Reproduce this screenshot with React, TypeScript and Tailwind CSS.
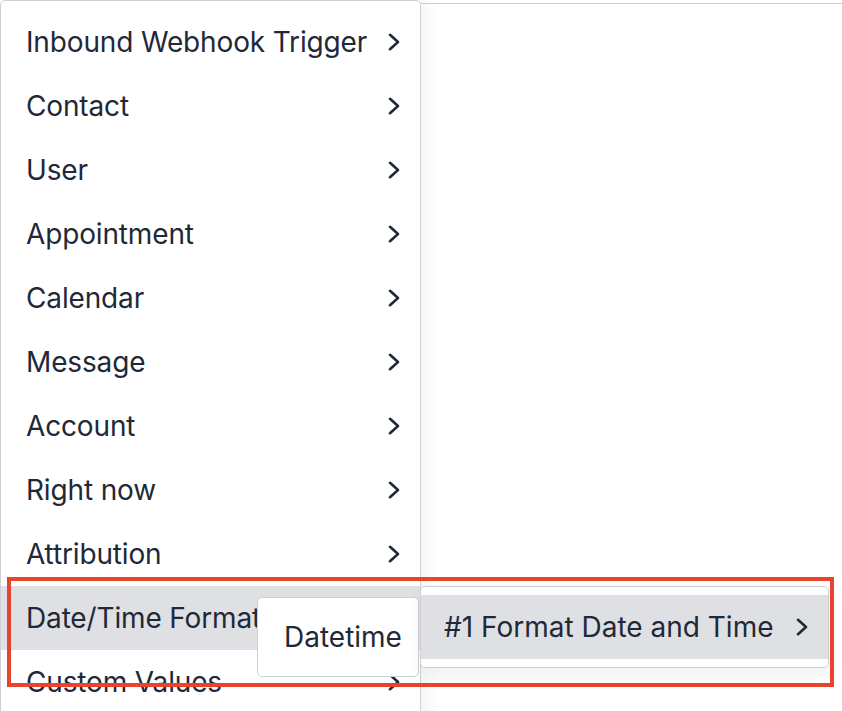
import React from "react";

const Chevron = () => (
  <svg width="14" height="18" viewBox="0 0 14 18" fill="none" className="shrink-0">
    <path d="M3 1.8 L11 9 L3 16.2" stroke="#1f2937" strokeWidth="2.6" strokeLinecap="round" strokeLinejoin="round" />
  </svg>
);

const items = [
  "Inbound Webhook Trigger",
  "Contact",
  "User",
  "Appointment",
  "Calendar",
  "Message",
  "Account",
  "Right now",
  "Attribution",
  "Date/Time Format",
  "Custom Values",
];

export default function App() {
  return (
    <div
      className="relative w-[842px] h-[711px] overflow-hidden bg-white text-[#1f2937]"
      style={{ fontFamily: "Inter, 'Noto Sans', sans-serif" }}
    >
      <div className="flex h-full">
        <div className="w-[421px] shrink-0 h-[760px] border-[1.5px] border-[#cfd0d3] rounded-[5px] bg-white pt-[9px] shadow-[6px_0_16px_rgba(0,0,0,0.05)] relative z-10">
          {items.map((t, i) => (
            <div
              key={t}
              className={`h-16 flex items-center justify-between pl-[25px] pr-[19px] text-[28px] tracking-[-0.15px] ${
                i === 9 ? "bg-[#dfe0e3]" : ""
              }`}
            >
              <span className="whitespace-nowrap overflow-hidden">{t}</span>
              <Chevron />
            </div>
          ))}
        </div>
        <div className="flex-1 mt-[3px] border-t-[1.5px] border-[#cfd0d3]" />
      </div>

      {/* Datetime submenu */}
      <div className="absolute z-20 left-[257px] top-[597px] w-[162px] h-[80px] bg-white border-[1.5px] border-[#cfd0d3] rounded-[5px] flex items-center pl-[26px] text-[28px]">
        Datetime
      </div>

      {/* Third submenu */}
      <div className="absolute z-20 left-[420px] top-[586px] w-[409px] h-[82px] bg-white border-[1.5px] border-[#cfd0d3] rounded-[5px] py-[8px] shadow-[0_8px_16px_rgba(0,0,0,0.06)]">
        <div className="h-16 bg-[#dfe0e3] flex items-center justify-between pl-[23px] pr-[19px] text-[28px]">
          <span className="whitespace-nowrap">#1 Format Date and Time</span>
          <Chevron />
        </div>
      </div>

      {/* Annotation rectangle */}
      <div className="absolute z-30 left-[7px] top-[577px] w-[827px] h-[110px] border-4 border-[#e8432d] pointer-events-none" />
    </div>
  );
}
